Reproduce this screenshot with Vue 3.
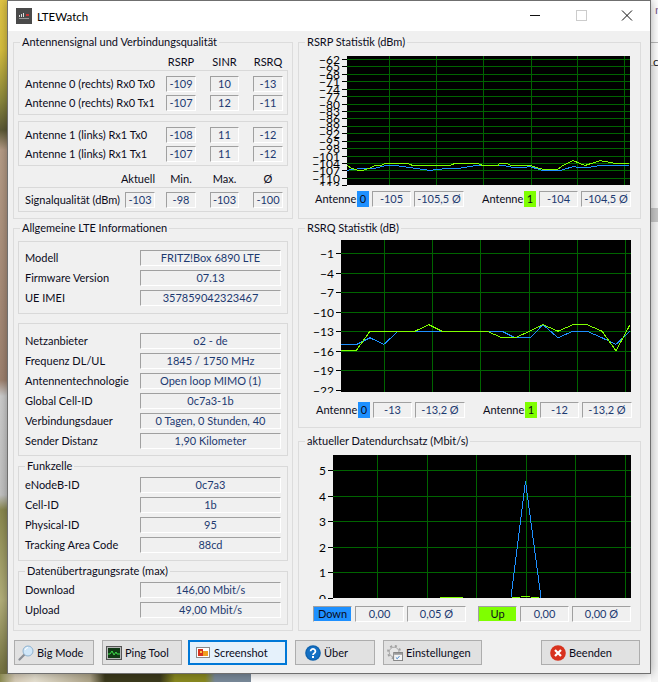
<script setup>
const signalRows = [
  [
    { label: 'Antenne 0 (rechts) Rx0 Tx0', values: ['-109', '10', '-13'] },
    { label: 'Antenne 0 (rechts) Rx0 Tx1', values: ['-107', '12', '-11'] }
  ],
  [
    { label: 'Antenne 1 (links) Rx1 Tx0', values: ['-108', '11', '-12'] },
    { label: 'Antenne 1 (links) Rx1 Tx1', values: ['-107', '11', '-12'] }
  ]
]

const deviceRows = [
  ['Modell', 'FRITZ!Box 6890 LTE'],
  ['Firmware Version', '07.13'],
  ['UE IMEI', '357859042323467']
]
const networkRows = [
  ['Netzanbieter', 'o2 - de'],
  ['Frequenz DL/UL', '1845 / 1750 MHz'],
  ['Antennentechnologie', 'Open loop MIMO (1)'],
  ['Global Cell-ID', '0c7a3-1b'],
  ['Verbindungsdauer', '0 Tagen, 0 Stunden, 40'],
  ['Sender Distanz', '1,90 Kilometer']
]
const cellRows = [
  ['eNodeB-ID', '0c7a3'],
  ['Cell-ID', '1b'],
  ['Physical-ID', '95'],
  ['Tracking Area Code', '88cd']
]
const rateRows = [
  ['Download', '146,00 Mbit/s'],
  ['Upload', '49,00 Mbit/s']
]

const buttons = [
  { text: 'Big Mode', icon: 'search', cls: 'btn-big' },
  { text: 'Ping Tool', icon: 'ping', cls: 'btn-ping' },
  { text: 'Screenshot', icon: 'shot', cls: 'btn-shot' },
  { text: 'Über', icon: 'help', cls: 'btn-help' },
  { text: 'Einstellungen', icon: 'gear', cls: 'btn-gear' },
  { text: 'Beenden', icon: 'quit', cls: 'btn-quit' }
]

// Werte -> Pixel, jede Kurve besteht aus Segmenten mit [x-Offset im Plot, Messwert]
function makeChart(cfg) {
  const toY = (v) => cfg.topY + (cfg.topValue - v) * cfg.pitch
  const line = (pts) => pts.map(([x, v]) => `${cfg.x + x},${(cfg.y + toY(v)).toFixed(1)}`).join(' ')
  const rows = cfg.ticks.map((v) => ({ v, y: cfg.y + Math.round(toY(v)) + 0.5, text: String(v).replace('-', '\u2212') }))
  return {
    ...cfg,
    rows,
    // die unterste Linie liegt auf dem Plotrand und ist nicht zu sehen
    gridRows: rows.slice(0, -1),
    cols: cfg.vlines.map((x) => cfg.x + x + 0.5),
    blueLines: cfg.blue.map(line),
    greenLines: cfg.green.map(line)
  }
}

const range = (from, to, step) => {
  const out = []
  for (let v = from; step < 0 ? v >= to : v <= to; v += step) out.push(v)
  return out
}

const rsrp = makeChart({
  title: 'RSRP Statistik (dBm)', cls: 'chart-rsrp',
  svgW: 332, svgH: 136, x: 48, y: 6, w: 283, h: 129,
  topValue: -62, topY: 3, pitch: 2.477,
  ticks: range(-62, -113, -3),
  vlines: [42, 89, 136, 184, 230, 277],
  blue: [[[0, -107], [6, -106.5], [29, -106], [39, -105], [49, -105], [66, -106], [83, -107], [91, -106.5], [114, -106], [129, -105], [156, -105], [169, -106], [183, -105.5], [196, -107], [213, -107], [226, -105.5], [238, -106], [253, -105], [282, -105]]],
  green: [[[0, -105], [4, -106], [11, -107], [16, -107], [23, -106], [28, -105], [34, -105], [39, -104], [59, -104], [66, -105], [103, -105], [109, -104], [129, -104], [136, -105], [151, -105], [153, -104], [159, -104], [164, -105], [184, -105], [191, -106], [196, -106.5], [211, -106.5], [216, -105], [226, -103], [238, -105], [253, -103], [266, -104], [282, -104]]]
})

const rsrq = makeChart({
  title: 'RSRQ Statistik (dB)', cls: 'chart-rsrq',
  svgW: 332, svgH: 157, x: 42, y: 4, w: 290, h: 152,
  topValue: -1, topY: 13, pitch: 6.52,
  ticks: range(-1, -22, -3),
  vlines: [43, 91, 139, 188, 236, 284],
  blue: [[[0, -15], [16, -15], [29, -14], [43, -15], [57, -13], [146, -13], [161, -13], [174, -14], [189, -14], [202, -12], [217, -14], [232, -13], [246, -13], [261, -14], [275, -15], [289, -13]]],
  green: [[[0, -16], [15, -16], [29, -13], [74, -13], [88, -12], [101, -13], [146, -13], [161, -14], [174, -14], [189, -13], [202, -12], [217, -13], [232, -12], [246, -12], [261, -13], [275, -16], [289, -12]]]
})

const rate = makeChart({
  title: 'aktueller Datendurchsatz (Mbit/s)', cls: 'chart-rate',
  svgW: 332, svgH: 150, x: 34, y: 6, w: 298, h: 143,
  topValue: 5, topY: 15, pitch: 25.5,
  ticks: [5, 4, 3, 2, 1, 0],
  vlines: [44, 94, 143, 193, 242, 292],
  blue: [[[178, 0], [192.5, 4.55], [208, 0]]],
  green: [[[107, 0.02], [130, 0.02]], [[179, 0.02], [187, 0.02]], [[188, 0.05], [197, 0.05]], [[198, 0.02], [206, 0.02]]]
})

const charts = [
  {
    ...rsrp,
    stats: [
      { name: 'Antenne', badge: '0', color: 'blue', now: '-105', avg: '-105,5 Ø' },
      { name: 'Antenne', badge: '1', color: 'green', now: '-104', avg: '-104,5 Ø' }
    ]
  },
  {
    ...rsrq,
    stats: [
      { name: 'Antenne', badge: '0', color: 'blue', now: '-13', avg: '-13,2 Ø' },
      { name: 'Antenne', badge: '1', color: 'green', now: '-12', avg: '-13,2 Ø' }
    ]
  },
  {
    ...rate,
    stats: [
      { badge: 'Down', color: 'blue', now: '0,00', avg: '0,05 Ø' },
      { badge: 'Up', color: 'green', now: '0,00', avg: '0,00 Ø' }
    ]
  }
]
</script>

<template>
  <div class="desktop">
    <div class="wall-left"></div>
    <div class="wall-bottom"></div>
    <div class="page-behind">
      <span class="page-n">n</span>
      <span class="page-ch">ch</span>
    </div>

    <div class="window">
      <header class="titlebar">
        <svg class="app-icon" viewBox="0 0 16 16" width="16" height="16">
          <rect width="16" height="16" fill="#4a4a4a" />
          <rect x="3" y="7" width="1" height="2" fill="#ddd" />
          <rect x="5" y="6" width="1" height="3" fill="#ddd" />
          <rect x="7" y="5" width="1" height="4" fill="#ddd" />
          <rect x="10" y="6" width="3" height="2" fill="#c33" />
          <rect x="3" y="10" width="10" height="1" fill="#999" />
        </svg>
        <span class="title">LTEWatch</span>
        <div class="win-controls">
          <svg width="46" height="30" viewBox="0 0 46 30"><path d="M18 14.5h10" stroke="#111" fill="none" /></svg>
          <svg width="46" height="30" viewBox="0 0 46 30"><rect x="18.5" y="9.5" width="10" height="10" stroke="#ccc" fill="none" /></svg>
          <svg width="46" height="30" viewBox="0 0 46 30"><path d="M18 9.5l10 10M28 9.5l-10 10" stroke="#111" fill="none" /></svg>
        </div>
      </header>

      <div class="body">
        <div class="columns">
          <div class="left-col">
            <fieldset class="group signal-group">
              <legend>Antennensignal und Verbindungsqualität</legend>
              <div class="sig-grid sig-head first-head">
                <span></span><span>RSRP</span><span>SINR</span><span>RSRQ</span>
              </div>
              <div v-for="(block, i) in signalRows" :key="i" class="box sig-box">
                <div v-for="row in block" :key="row.label" class="sig-grid sig-row">
                  <span class="label">{{ row.label }}</span>
                  <span v-for="(v, j) in row.values" :key="j" class="field">{{ v }}</span>
                </div>
              </div>
              <div class="sig-grid sig-head second-head">
                <span class="now-head">Aktuell</span><span>Min.</span><span>Max.</span><span>Ø</span>
              </div>
              <div class="box quality-box">
                <div class="sig-grid">
                  <span class="now-cell">
                    <span class="label">Signalqualität (dBm)</span>
                    <span class="field now-field">-103</span>
                  </span>
                  <span class="field">-98</span>
                  <span class="field">-103</span>
                  <span class="field">-100</span>
                </div>
              </div>
            </fieldset>

            <fieldset class="group info-group">
              <legend>Allgemeine LTE Informationen</legend>
              <div class="box info-box device-box">
                <div v-for="row in deviceRows" :key="row[0]" class="info-row">
                  <span class="label">{{ row[0] }}</span><span class="field">{{ row[1] }}</span>
                </div>
              </div>
              <div class="box info-box network-box">
                <div v-for="row in networkRows" :key="row[0]" class="info-row">
                  <span class="label">{{ row[0] }}</span><span class="field">{{ row[1] }}</span>
                </div>
              </div>
              <fieldset class="group sub-group cell-group">
                <legend>Funkzelle</legend>
                <div v-for="row in cellRows" :key="row[0]" class="info-row">
                  <span class="label">{{ row[0] }}</span><span class="field">{{ row[1] }}</span>
                </div>
              </fieldset>
              <fieldset class="group sub-group rate-group">
                <legend>Datenübertragungsrate (max)</legend>
                <div v-for="row in rateRows" :key="row[0]" class="info-row">
                  <span class="label">{{ row[0] }}</span><span class="field">{{ row[1] }}</span>
                </div>
              </fieldset>
            </fieldset>
          </div>

          <div class="right-col">
            <fieldset v-for="c in charts" :key="c.title" class="group chart-group" :class="c.cls">
              <legend>{{ c.title }}</legend>
              <svg class="chart" :width="c.svgW" :height="c.svgH">
                <rect :x="c.x" :y="c.y" :width="c.w" :height="c.h" fill="#000" />
                <g stroke="#006400" shape-rendering="crispEdges">
                  <line v-for="r in c.gridRows" :key="r.v" :x1="c.x" :x2="c.x + c.w" :y1="r.y" :y2="r.y" />
                  <line v-for="x in c.cols" :key="x" :x1="x" :x2="x" :y1="c.y" :y2="c.y + c.h" />
                </g>
                <g stroke="#000" shape-rendering="crispEdges">
                  <line v-for="r in c.rows" :key="r.v" :x1="c.x - 5" :x2="c.x" :y1="r.y" :y2="r.y" />
                </g>
                <text v-for="r in c.rows" :key="r.v" class="tick" :x="c.x - 7" :y="r.y + 4" text-anchor="end">{{ r.text }}</text>
                <polyline v-for="(pts, i) in c.blueLines" :key="i" :points="pts" fill="none" stroke="#1e90ff" shape-rendering="crispEdges" />
                <polyline v-for="(pts, i) in c.greenLines" :key="i" :points="pts" fill="none" stroke="#7fff00" shape-rendering="crispEdges" />
              </svg>
              <div class="stats">
                <div v-for="s in c.stats" :key="s.badge" class="stat">
                  <span v-if="s.name" class="label stat-name">{{ s.name }}</span>
                  <span class="badge" :class="s.color">{{ s.badge }}</span>
                  <span class="field stat-now">{{ s.now }}</span>
                  <span class="field stat-avg">{{ s.avg }}</span>
                </div>
              </div>
            </fieldset>
          </div>
        </div>

        <div class="button-bar">
          <button v-for="b in buttons" :key="b.text" class="btn" :class="b.cls">
            <svg v-if="b.icon === 'search'" viewBox="0 0 16 16" width="16" height="16">
              <path d="M6 10L1.5 14.5" stroke="#8a8f96" stroke-width="2.2" stroke-linecap="round" />
              <circle cx="10" cy="6" r="5" fill="#cfe6f8" stroke="#8fb2cf" />
              <path d="M7 5a3.5 3.5 0 0 1 3-2.5" stroke="#fff" fill="none" />
            </svg>
            <svg v-else-if="b.icon === 'ping'" viewBox="0 0 16 16" width="16" height="16">
              <rect x="0.5" y="1.5" width="15" height="13" fill="#b8b8b8" stroke="#555" />
              <rect x="2" y="3" width="12" height="10" fill="#123a16" />
              <path d="M2 9h2l2-3 2 4 2-3 1 2h3" stroke="#3fdc4a" fill="none" />
            </svg>
            <svg v-else-if="b.icon === 'shot'" viewBox="0 0 16 16" width="16" height="16">
              <rect x="1.5" y="2.5" width="13" height="10" fill="#fff" stroke="#8a8a8a" />
              <rect x="3" y="4" width="5" height="7" fill="#d8321e" />
              <rect x="8" y="6" width="5" height="5" fill="#f0a020" />
              <rect x="5" y="6" width="2" height="2" fill="#f6c84a" />
            </svg>
            <svg v-else-if="b.icon === 'help'" viewBox="0 0 16 16" width="16" height="16">
              <circle cx="8" cy="8" r="7.8" fill="#0f62ad" />
              <circle cx="8" cy="8" r="6.5" fill="#1470c4" />
              <path d="M5.6 6.2a2.4 2.3 0 1 1 3.6 2c-.8.5-1.2.9-1.2 1.8" stroke="#fff" stroke-width="1.8" fill="none" />
              <rect x="7" y="11" width="2" height="2" fill="#fff" />
            </svg>
            <svg v-else-if="b.icon === 'gear'" viewBox="0 0 18 18" width="16" height="16">
              <circle cx="8" cy="8" r="5.5" fill="#e6e6e6" stroke="#a0a0a0" />
              <circle cx="8" cy="8" r="7" fill="none" stroke="#a0a0a0" stroke-width="2" stroke-dasharray="2.4 3.1" />
              <rect x="7.5" y="8.5" width="10" height="9" fill="#f4f4f4" stroke="#7d7d7d" />
              <rect x="8" y="9" width="9" height="2" fill="#9a9a9a" />
              <path d="M10 14l1.5 1.5 2.5-3" stroke="#2d78c8" fill="none" />
            </svg>
            <svg v-else viewBox="0 0 16 16" width="16" height="16">
              <circle cx="8" cy="8" r="7.8" fill="#d8321e" />
              <path d="M5 5l6 6M11 5l-6 6" stroke="#fff" stroke-width="2.2" />
            </svg>
            <span>{{ b.text }}</span>
          </button>
        </div>
      </div>
    </div>
  </div>
</template>

<style>
html, body {
  margin: 0;
  background: #fff;
}
</style>

<style scoped>
.desktop {
  position: relative;
  width: 658px;
  height: 682px;
  overflow: hidden;
  background: #fff;
  font-family: Lato, "Liberation Sans", sans-serif;
  font-size: 11px;
  color: #0b0b1a;
}

.wall-left {
  position: absolute;
  left: 0;
  top: 0;
  width: 8px;
  height: 682px;
  background: linear-gradient(180deg, #e2c646 0, #d8c040 50px, #8d8a3e 100px, #5d5a36 130px, #b89e88 150px, #a08370 380px, #cfcfcf 396px, #c4c4c4 495px, #8c8a50 510px, #b6b27c 600px, #6e6c3a 682px);
}

.wall-bottom {
  position: absolute;
  left: 0;
  top: 674px;
  width: 251px;
  height: 8px;
  background: linear-gradient(90deg, #8a8a50 0, #d8cdb8 15px, #e8e2d2 35px, #b0a68a 90px, #3c3a1c 105px, #3c3a1c 160px, #8a8a20 175px, #8a8a20 205px, #7a8a9a 215px);
}

.page-behind {
  position: absolute;
  left: 651px;
  top: 0;
  width: 7px;
  height: 682px;
  background: linear-gradient(180deg, #fff 0, #fff 42px, #bbb 42px, #bbb 43px, #fff 43px, #fff 65px, #bbb 65px, #bbb 66px, #f6f6f6 66px, #f6f6f6 208px, #c8c8c8 208px, #c8c8c8 222px, #f6f6f6 222px);
}

.page-n {
  position: absolute;
  left: 4px;
  top: 2px;
  font-size: 12px;
  color: #7b5a8c;
}

.page-ch {
  position: absolute;
  left: 2px;
  top: 54px;
  font-size: 12px;
  color: #222;
}

.window {
  position: relative;
  box-sizing: border-box;
  margin-left: 7px;
  width: 644px;
  height: 674px;
  background: #f0f0f0;
  border: 1px solid #6f6f6f;
  box-shadow: 0 0 10px rgba(0, 0, 0, 0.35);
}

.titlebar {
  display: flex;
  align-items: center;
  height: 30px;
  background: #fff;
}

.app-icon {
  margin-left: 8px;
}

.title {
  margin-left: 5px;
  font-size: 11.5px;
  color: #000;
}

.win-controls {
  display: flex;
  margin-left: auto;
}

.win-controls svg {
  display: block;
}

.body {
  padding: 3px 9px 0 5px;
}

.columns {
  display: flex;
  gap: 5px;
}

.left-col {
  width: 280px;
}

.right-col {
  width: 343px;
}

.group {
  box-sizing: border-box;
  margin: 0;
  padding: 0;
  min-width: 0;
  border: 1px solid #dcdcdc;
}

.group legend {
  margin-left: 6px;
  padding: 0 2px;
  height: 16px;
  line-height: 16px;
}

.box {
  box-sizing: border-box;
  margin: 0 4px;
  border: 1px solid #d9d9d9;
}

.field {
  box-sizing: border-box;
  display: block;
  height: 16px;
  line-height: 14px;
  text-align: center;
  white-space: nowrap;
  color: #1d3a70;
  background: #f0f0f0;
  border: 1px solid;
  border-color: #a0a0a0 #fff #fff #a0a0a0;
}

.label {
  white-space: nowrap;
  line-height: 16px;
}

/* Signal */
.signal-group {
  height: 185px;
}

.sig-grid {
  display: grid;
  grid-template-columns: 127px 30px 29px 30px;
  column-gap: 14px;
  padding-left: 6px;
}

.sig-head {
  box-sizing: border-box;
  height: 16px;
  margin: 0 5px;
  text-align: center;
  line-height: 16px;
}

.first-head {
  margin-top: 4px;
}

.second-head {
  margin-top: 5px;
}

.now-head {
  width: 130px;
  text-align: right;
  white-space: nowrap;
}

.sig-box {
  height: 45px;
  padding-top: 5px;
  margin-bottom: 6px;
}

.sig-box:nth-of-type(3) {
  margin-bottom: 0;
}

.sig-row {
  height: 19px;
}

.quality-box {
  height: 25px;
  padding-top: 4px;
}

.now-cell {
  display: flex;
  justify-content: space-between;
  width: 130px;
}

.now-field {
  width: 30px;
}

/* Informationen */
.info-group {
  height: 411px;
  margin-top: 1px;
}

.info-box {
  margin-top: 5px;
}

.device-box {
  height: 73px;
  padding-top: 8px;
}

.network-box {
  height: 133px;
  margin-top: 9px;
  padding-top: 9px;
}

.info-row {
  display: grid;
  grid-template-columns: 115px 141px;
  height: 16px;
  padding-left: 6px;
  margin-bottom: 4px;
}

.sub-group {
  margin: 2px 4px 0;
  border-color: #d9d9d9;
}

.sub-group legend {
  margin-left: 6px;
}

.sub-group .info-row:first-of-type {
  margin-top: 3px;
}

.cell-group {
  height: 103px;
}

.rate-group {
  height: 62px;
}

/* Charts */
.chart-rsrp {
  height: 185px;
}

.chart-rsrq {
  height: 208px;
  margin-top: 1px;
}

.chart-rate {
  height: 198px;
  margin-top: 5px;
}

.chart {
  display: block;
}

.tick {
  font-size: 12px;
  fill: #000;
}

.stats {
  display: flex;
}

.stat {
  display: flex;
  align-items: center;
}

.stat-name {
  width: 42px;
}

.chart-rsrp .stats {
  margin-top: 5px;
  padding-left: 16px;
  gap: 18px;
}

.chart-rsrq .stats {
  margin-top: 9px;
  padding-left: 17px;
  gap: 18px;
}

.chart-rate .stats {
  margin-top: 7px;
  padding-left: 14px;
  gap: 12px;
}

.badge {
  box-sizing: border-box;
  width: 12px;
  height: 16px;
  line-height: 15px;
  text-align: center;
}

.chart-rate .badge {
  width: 39px;
  border: 1px solid;
  border-color: #a0a0a0 #f0f0f0 #f0f0f0 #a0a0a0;
  line-height: 14px;
}

.badge.blue {
  background: #1e90ff;
}

.badge.green {
  background: #7fff00;
}

.stat-now {
  width: 39px;
  margin-left: 3px;
}

.stat-avg {
  width: 50px;
  margin-left: 3px;
}

.chart-rate .stat-now {
  width: 49px;
}

.chart-rate .stat-avg {
  width: 59px;
}

/* Buttons */
.button-bar {
  display: flex;
  margin-top: 9px;
  padding-left: 1px;
}

.btn {
  box-sizing: border-box;
  display: flex;
  align-items: center;
  gap: 3px;
  height: 25px;
  margin: 0 8px 0 0;
  padding: 0 0 0 3px;
  font: inherit;
  color: #0b0b1a;
  background: #e1e1e1;
  border: 1px solid #adadad;
}

.btn svg {
  flex: none;
}

.btn-big,
.btn-ping,
.btn-help {
  width: 80px;
}

.btn-ping {
  margin-right: 6px;
}

.btn-shot {
  width: 99px;
  padding-left: 5px;
  background: #e5f1fb;
  border: 2px solid #0078d7;
}

.btn-help {
  padding-left: 9px;
}

.btn-gear {
  width: 99px;
  margin-right: 59px;
}

.btn-quit {
  width: 99px;
  margin-right: 0;
  padding-left: 8px;
}
</style>
